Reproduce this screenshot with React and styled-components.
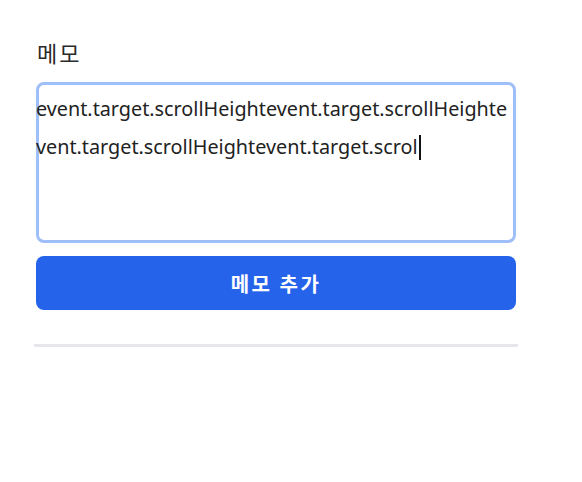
import React from 'react';
import styled, { createGlobalStyle } from 'styled-components';

const GlobalStyle = createGlobalStyle`
  html, body {
    margin: 0;
    padding: 0;
    background: #ffffff;
  }
  body {
    font-family: "Noto Sans", "Noto Sans CJK KR", sans-serif;
    color: #222;
  }
`;

const Page = styled.div`
  width: 480px;
  padding: 36px 36px 0 36px;
  display: flex;
  flex-direction: column;
`;

const Label = styled.label`
  font-family: "Noto Sans CJK KR", sans-serif;
  font-size: 22px;
  line-height: 32px;
  letter-spacing: 2px;
  color: #2a2a2a;
  margin-bottom: 14px;
  padding-left: 1px;
`;

const Memo = styled.div`
  box-sizing: border-box;
  height: 161px;
  border: 3px solid #9ebff8;
  border-radius: 8px;
  padding-top: 5px;
  font-size: 19.8px;
  line-height: 38px;
  color: #222;
  word-break: break-all;
`;

const MemoText = styled.div`
  margin-left: -3px;
  margin-right: 2px;
`;

const Caret = styled.span`
  display: inline-block;
  width: 2px;
  height: 25px;
  background: #111;
  vertical-align: -6px;
  margin-left: 1px;
`;

const AddButton = styled.button`
  margin-top: 13px;
  height: 54px;
  border: none;
  border-radius: 8px;
  background: #2563eb;
  color: #fff;
  font-family: "Noto Sans CJK KR", sans-serif;
  font-size: 20px;
  font-weight: 700;
  letter-spacing: 2.5px;
  cursor: pointer;
`;

const Divider = styled.hr`
  margin: 34px -2px 0 -2px;
  border: none;
  height: 3px;
  background: #e5e7eb;
`;

export default function App() {
  const text = 'event.target.scrollHeightevent.target.scrollHeightevent.target.scrollHeightevent.target.scrol';
  return (
    <>
      <GlobalStyle />
      <Page>
        <Label>메모</Label>
        <Memo>
          <MemoText>
            {text}
            <Caret />
          </MemoText>
        </Memo>
        <AddButton>메모 추가</AddButton>
        <Divider />
      </Page>
    </>
  );
}
